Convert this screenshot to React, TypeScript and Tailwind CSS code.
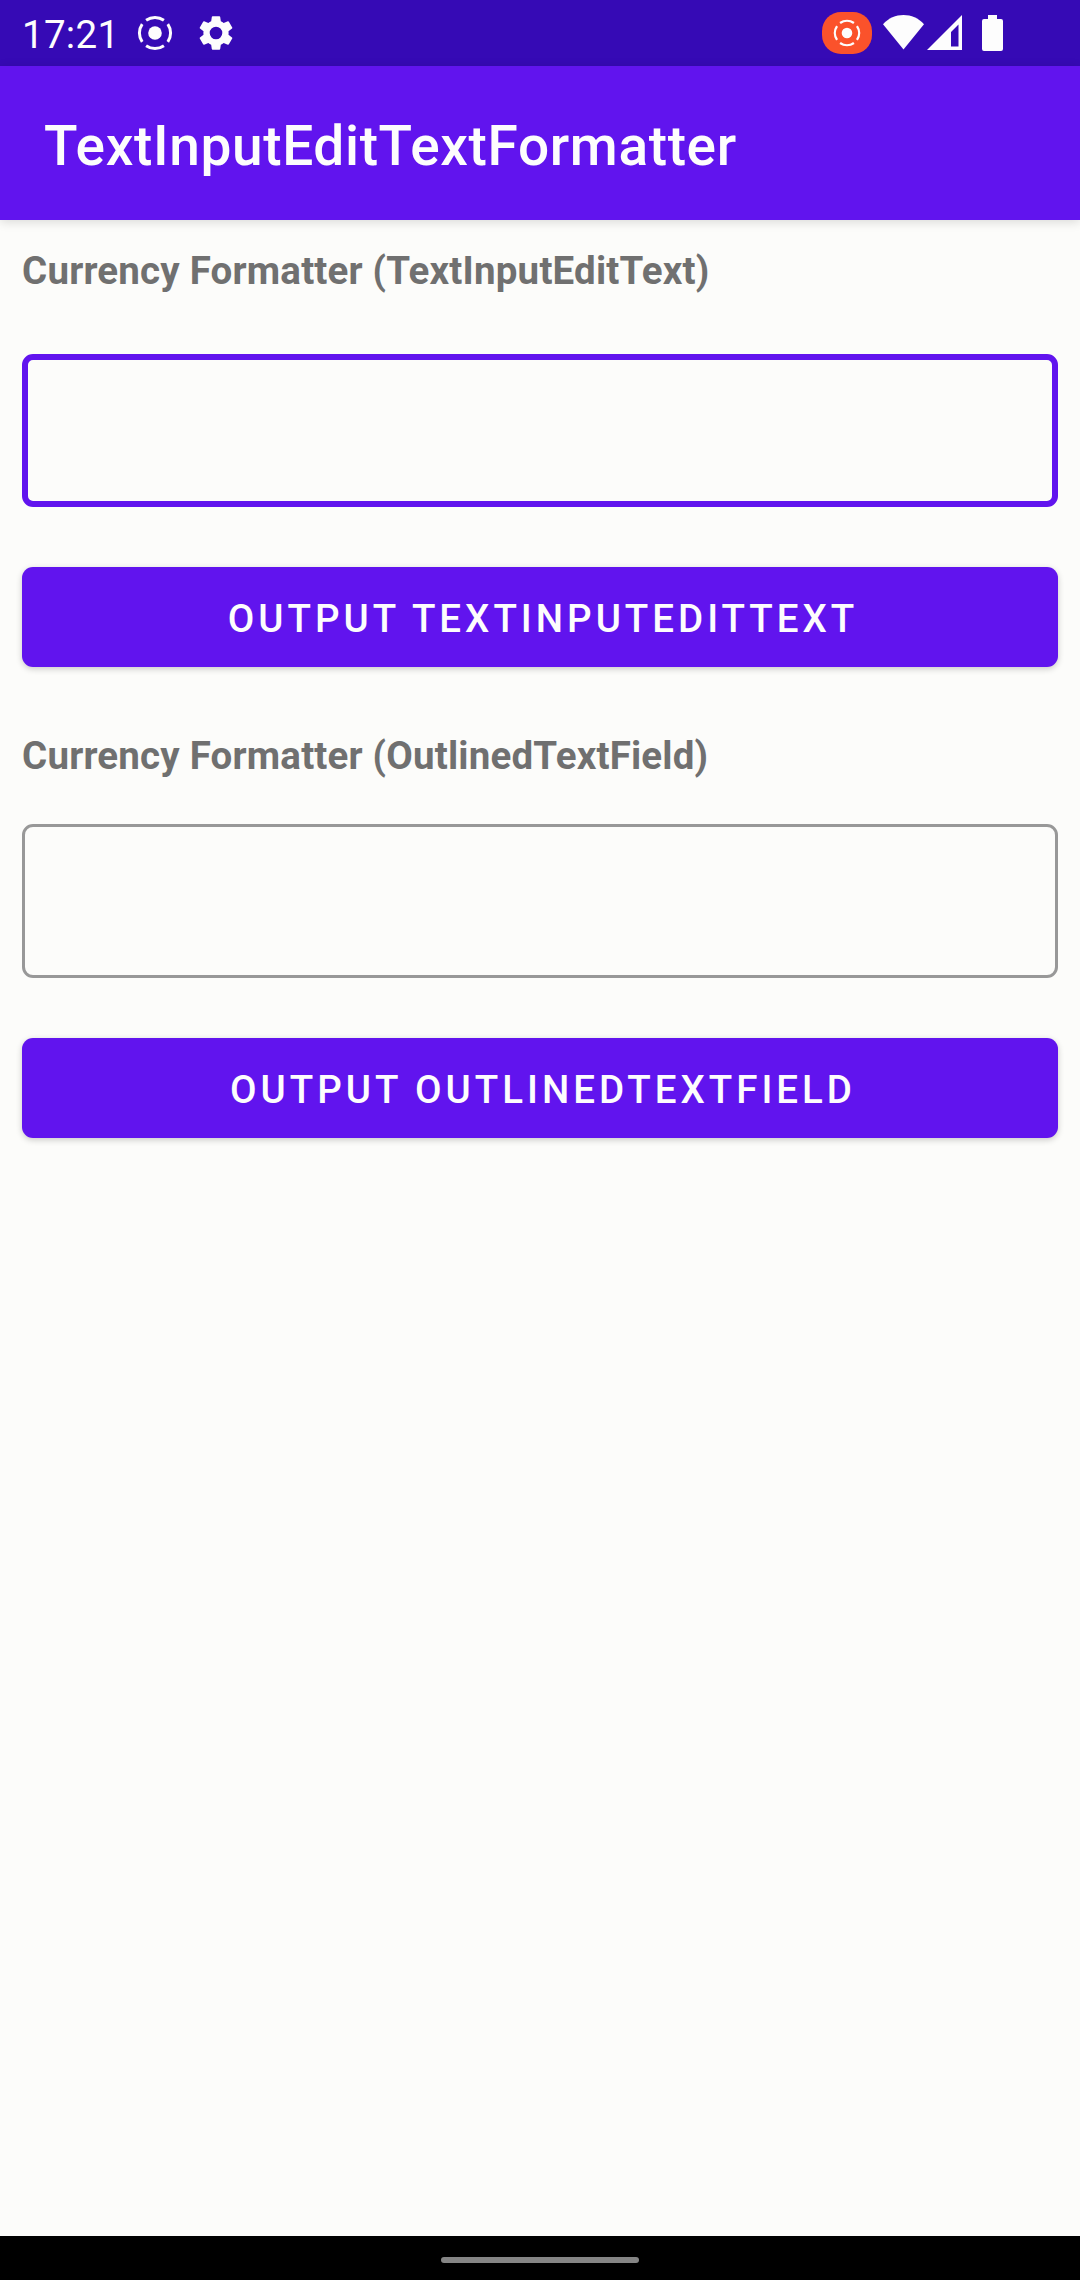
import React from "react";

function RecordIcon({ className }: { className: string }) {
  return (
    <svg className={className} viewBox="0 0 36 36" fill="none">
      <circle cx="18" cy="18" r="6.8" fill="#fdfdfd" />
      <g stroke="#fdfdfd" strokeWidth="3">
        <path d="M9.1 5.2A15.6 15.6 0 0 1 26.9 5.2" />
        <path d="M30.8 9.1A15.6 15.6 0 0 1 30.8 26.9" />
        <path d="M26.9 30.8A15.6 15.6 0 0 1 9.1 30.8" />
        <path d="M5.2 26.9A15.6 15.6 0 0 1 5.2 9.1" />
      </g>
    </svg>
  );
}

function GearIcon() {
  return (
    <svg className="ml-[22px] size-[42px]" viewBox="0 0 24 24" fill="#fdfdfd">
      <path d="M19.14 12.94c.04-.3.06-.61.06-.94 0-.32-.02-.64-.07-.94l2.03-1.58a.49.49 0 0 0 .12-.61l-1.92-3.32a.49.49 0 0 0-.59-.22l-2.39.96a7 7 0 0 0-1.62-.94l-.36-2.54a.48.48 0 0 0-.48-.41h-3.84a.47.47 0 0 0-.47.41l-.36 2.54c-.59.24-1.13.57-1.62.94l-2.39-.96a.48.48 0 0 0-.59.22L2.74 8.87a.48.48 0 0 0 .12.61l2.03 1.58c-.05.3-.09.63-.09.94s.02.64.07.94l-2.03 1.58a.49.49 0 0 0-.12.61l1.92 3.32c.12.22.37.29.59.22l2.39-.96c.5.38 1.03.7 1.62.94l.36 2.54c.05.24.24.41.48.41h3.84c.24 0 .44-.17.47-.41l.36-2.54a6.9 6.9 0 0 0 1.62-.94l2.39.96c.22.08.47 0 .59-.22l1.92-3.32a.47.47 0 0 0-.12-.61zM12 15.6A3.6 3.6 0 1 1 12 8.4a3.6 3.6 0 0 1 0 7.2" />
    </svg>
  );
}

function StatusBar() {
  return (
    <header className="flex h-[66px] items-start bg-[#360ab5] pl-[22px]">
      <span className="mt-[12px] w-[115px] text-[38.5px] leading-[46px] tracking-[0.3px] text-[#fdfdfd]">17:21</span>
      <div className="mt-[12px] flex items-center">
        <RecordIcon className="size-[36px]" />
        <GearIcon />
      </div>
      <div className="mt-[12px] mr-[77px] ml-auto flex">
        <div className="flex h-[42px] w-[50px] items-center justify-center rounded-[19px] bg-[#fb522b]">
          <RecordIcon className="size-[28px]" />
        </div>
        <svg className="mt-[3px] ml-[11px] h-[35px] w-[41px]" viewBox="0 0 41 35" fill="#fdfdfd">
          <path d="M0 9.3C5.6 3 12.7 0 20.5 0S35.4 3 41 9.3L20.5 34.5Z" />
        </svg>
        <svg className="mt-[3px] ml-[3px] h-[35px] w-[35px]" viewBox="0 0 35 35" fill="#fdfdfd">
          <path fillRule="evenodd" d="M35 0V35H0ZM31.5 9.5L24 17V31.5H31.5Z" />
        </svg>
        <svg className="mt-[3px] ml-[20px] h-[36px] w-[21px]" viewBox="0 0 21 36" fill="#fdfdfd">
          <path d="M6 0H15V4H19Q21 4 21 6V34Q21 36 19 36H2Q0 36 0 34V6Q0 4 2 4H6Z" />
        </svg>
      </div>
    </header>
  );
}

function Label({ children }: { children: React.ReactNode }) {
  return (
    <h2 className="text-[38.5px] leading-[52px] font-bold tracking-[0.19px] whitespace-nowrap text-[#707070]">
      {children}
    </h2>
  );
}

function OutputButton({ children }: { children: React.ReactNode }) {
  return (
    <button className="mt-[60px] flex h-[100px] w-full items-center justify-center rounded-[11px] bg-[#6114ee] pt-[4px] pl-[6px] text-[38.5px] leading-[46px] font-medium tracking-[4px] text-[#fdfdfd] shadow-[0_2px_6px_rgba(0,0,0,0.2)]">
      {children}
    </button>
  );
}

export default function App() {
  return (
    <div className="flex h-[2280px] w-[1080px] flex-col overflow-hidden bg-[#fcfcfa] font-['Roboto',sans-serif]">
      <StatusBar />
      <div className="flex h-[154px] items-center bg-[#6114ee] pt-[5px] pl-[44px] shadow-[0_2px_10px_rgba(0,0,0,0.14)]">
        <h1 className="text-[55px] leading-[64px] font-medium tracking-[0.64px] text-[#fdfdfd]">
          TextInputEditTextFormatter
        </h1>
      </div>
      <main className="flex-1 px-[22px] pt-[25px]">
        <Label>Currency Formatter (TextInputEditText)</Label>
        <input
          aria-label="TextInputEditText"
          className="mt-[57px] block h-[153px] w-full rounded-[11px] border-[6px] border-[#6114ee] px-[38px] text-[44px] outline-none"
        />
        <OutputButton>OUTPUT TEXTINPUTEDITTEXT</OutputButton>
        <div className="mt-[63px]">
          <Label>Currency Formatter (OutlinedTextField)</Label>
        </div>
        <input
          aria-label="OutlinedTextField"
          className="mt-[42px] block h-[154px] w-full rounded-[11px] border-[3px] border-[#989898] px-[41px] text-[44px] outline-none"
        />
        <OutputButton>OUTPUT OUTLINEDTEXTFIELD</OutputButton>
      </main>
      <footer className="flex h-[44px] justify-center bg-black pt-[21px]">
        <div className="h-[6px] w-[198px] rounded-full bg-[#858585]" />
      </footer>
    </div>
  );
}
